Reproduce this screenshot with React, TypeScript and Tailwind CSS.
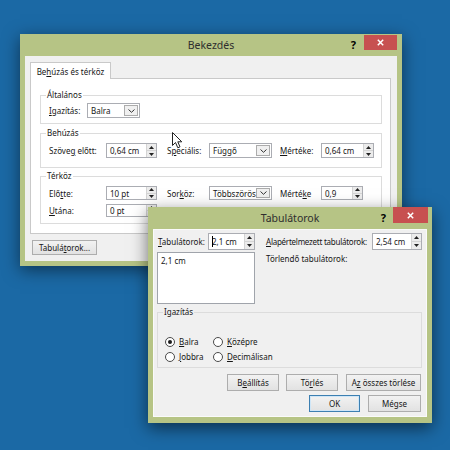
import React from "react";

type Kids = { children?: React.ReactNode };

function Key({ children }: Kids) {
  return <span className="underline decoration-1 underline-offset-1">{children}</span>;
}

function UpDown() {
  return (
    <div className="w-[10px] flex flex-col border-l border-[#d4d4d4] bg-[#ececec]">
      <div className="flex-1 flex items-center justify-center border-b border-[#d4d4d4]">
        <svg width="5" height="3" viewBox="0 0 5 3">
          <path d="M0 3 L2.5 0 L5 3Z" fill="#222" />
        </svg>
      </div>
      <div className="flex-1 flex items-center justify-center">
        <svg width="5" height="3" viewBox="0 0 5 3">
          <path d="M0 0 L5 0 L2.5 3Z" fill="#222" />
        </svg>
      </div>
    </div>
  );
}

function Spin({ value, className, caret }: { value: string; className: string; caret?: boolean }) {
  return (
    <div className={`flex bg-white border border-[#abadb3] ${className}`}>
      <div className="flex-1 flex items-center pl-[3px] whitespace-nowrap relative">
        {caret && <span className="absolute left-[3px] top-[2px] bottom-[2px] w-px bg-black" />}
        {value}
      </div>
      <UpDown />
    </div>
  );
}

function Select({ value, className }: { value: string; className: string }) {
  return (
    <div className={`flex bg-white border border-[#abadb3] ${className}`}>
      <div className="flex-1 flex items-center pl-[3px] overflow-hidden whitespace-nowrap">{value}</div>
      <div className="w-[14px] my-px mr-px flex items-center justify-center border border-[#acacac] bg-[#f0f0f0]">
        <svg width="7" height="4" viewBox="0 0 7 4">
          <path d="M0.5 0.5 L3.5 3.3 L6.5 0.5" stroke="#333" strokeWidth="1" fill="none" />
        </svg>
      </div>
    </div>
  );
}

function Btn({ children, className, primary }: Kids & { className: string; primary?: boolean }) {
  return (
    <div
      className={`flex items-center justify-center border bg-linear-to-b from-[#f2f2f2] to-[#e2e2e2] ${
        primary ? "border-[#3c7fb1] shadow-[inset_0_0_0_1px_#cfe6f7]" : "border-[#adadad]"
      } ${className}`}
    >
      <span className="whitespace-nowrap">{children}</span>
    </div>
  );
}

function Radio({ checked, children }: Kids & { checked?: boolean }) {
  return (
    <div className="flex items-center gap-[4px]">
      <div className="w-[10px] h-[10px] rounded-full border border-[#4a4a4a] bg-white flex items-center justify-center">
        {checked && <div className="w-[4px] h-[4px] rounded-full bg-[#1a1a1a]" />}
      </div>
      <span>{children}</span>
    </div>
  );
}

function Group({ label, labelBg, className, children }: Kids & { label: string; labelBg: string; className: string }) {
  return (
    <div className={`relative border border-[#dcdcdc] ${className}`}>
      <span className={`absolute -top-[7px] left-[5px] px-px leading-[12px] ${labelBg}`}>{label}</span>
      {children}
    </div>
  );
}

function TitleBar({ title, closeClass, helpClass }: { title: string; closeClass: string; helpClass: string }) {
  return (
    <div className="h-[22px] shrink-0 grid grid-cols-[1fr_auto_1fr]">
      <div />
      <div className="flex items-center text-[10.5px] text-[#2e2e2e]">{title}</div>
      <div className="flex justify-end items-start">
        <span className={`text-[11px] font-bold leading-none text-black ${helpClass}`}>?</span>
        <div className={`bg-[#c75050] flex items-center justify-center ${closeClass}`}>
          <svg width="7" height="7" viewBox="0 0 7 7">
            <path d="M0.8 0.8 L6.2 6.2 M6.2 0.8 L0.8 6.2" stroke="#fff" strokeWidth="1.5" />
          </svg>
        </div>
      </div>
    </div>
  );
}

function Cursor() {
  return (
    <svg className="absolute left-[172px] top-[132px]" width="11" height="17" viewBox="0 0 11 17">
      <path
        d="M0.5 0.5 L0.5 13.5 L3.5 10.5 L5.8 15.8 L8 14.8 L5.8 9.8 L9.8 9.8 Z"
        fill="#fff"
        stroke="#222"
        strokeWidth="1"
        strokeLinejoin="round"
      />
    </svg>
  );
}

function ParagraphDialog() {
  return (
    <div className="absolute left-[20px] top-[34px] w-[382px] h-[232px] bg-[#b6c485] flex flex-col shadow-[0_4px_16px_rgba(0,0,0,0.5)]">
      <TitleBar title="Bekezdés" helpClass="mt-[5px] mr-[8px]" closeClass="w-[33px] h-[15px] mt-px mr-[5px]" />
      <div className="flex-1 mx-[5px] mb-[5px] bg-[#f0f0f0] flex flex-col pt-[6px] pl-[5px] pr-[6px]">
        <div className="flex">
          <div className="relative z-10 -mb-px h-[17px] w-[81px] bg-white border border-b-0 border-[#c9c9c9] flex items-center justify-center">
            <span className="whitespace-nowrap">
              Be<Key>h</Key>úzás és térköz
            </span>
          </div>
        </div>
        <div className="h-[156px] bg-white border border-[#c9c9c9] flex flex-col pt-[16px] pl-[9px] pr-[8px]">
          <Group label="Általános" labelBg="bg-white" className="h-[29px] pt-[7px] pl-[8px]">
            <div className="flex items-center">
              <span className="w-[38px]">
                <Key>I</Key>gazítás:
              </span>
              <Select value="Balra" className="w-[53px] h-[15px]" />
            </div>
          </Group>
          <Group label="Behúzás" labelBg="bg-white" className="mt-[9px] h-[35px] pt-[9px] pl-[8px]">
            <div className="flex items-center">
              <span className="w-[57px]">
                Szöve<Key>g</Key> előtt:
              </span>
              <Spin value="0,64 cm" className="w-[51px] h-[15px]" />
              <span className="ml-[10px] w-[42px]">
                S<Key>p</Key>eciális:
              </span>
              <Select value="Függő" className="w-[63px] h-[15px]" />
              <span className="ml-[8px] w-[41px]">
                <Key>M</Key>értéke:
              </span>
              <Spin value="0,64 cm" className="w-[53px] h-[15px]" />
            </div>
          </Group>
          <Group label="Térköz" labelBg="bg-white" className="mt-[8px] h-[48px] pt-[9px] pl-[8px]">
            <div className="flex items-center">
              <span className="w-[57px]">
                Elő<Key>t</Key>te:
              </span>
              <Spin value="10 pt" className="w-[51px] h-[14px]" />
              <span className="ml-[10px] w-[42px]">
                Sor<Key>k</Key>öz:
              </span>
              <Select value="Többszörös" className="w-[63px] h-[14px]" />
              <span className="ml-[8px] w-[41px]">
                Mérté<Key>k</Key>e
              </span>
              <Spin value="0,9" className="w-[42px] h-[14px]" />
            </div>
            <div className="flex items-center mt-[4px]">
              <span className="w-[57px]">
                <Key>U</Key>tána:
              </span>
              <Spin value="0 pt" className="w-[51px] h-[13px]" />
            </div>
          </Group>
        </div>
        <div className="flex mt-[6px] pl-[2px]">
          <Btn className="w-[65px] h-[15px]">
            Tabulá<Key>t</Key>orok...
          </Btn>
        </div>
      </div>
    </div>
  );
}

function TabsDialog() {
  return (
    <div className="absolute left-[148px] top-[207px] w-[284px] h-[216px] bg-[#b6c485] flex flex-col shadow-[0_5px_16px_rgba(0,0,0,0.55)]">
      <TitleBar title="Tabulátorok" helpClass="mt-[5px] mr-[7px]" closeClass="w-[35px] h-[16px] mr-[4px]" />
      <div className="flex-1 mx-[5px] mb-[6px] bg-[#f0f0f0] border border-[#fafafa] flex flex-col pt-[3px] pl-[3px] pr-[4px]">
        <div className="flex">
          <div className="w-[98px] flex flex-col">
            <div className="flex items-center">
              <span className="w-[51px] pl-px">
                <Key>T</Key>abulátorok:
              </span>
              <Spin value="2,1 cm" caret className="w-[47px] h-[17px]" />
            </div>
            <div className="mt-[2px] h-[52px] bg-white border border-[#a0a4ab] pl-[3px] pt-[2px]">2,1 cm</div>
          </div>
          <div className="ml-[11px] flex-1 flex flex-col">
            <div className="flex items-center">
              <span className="w-[106px] whitespace-nowrap tracking-[-0.25px]">
                <Key>A</Key>lapértelmezett tabulátorok:
              </span>
              <Spin value="2,54 cm" className="w-[50px] h-[17px]" />
            </div>
            <div className="mt-[3px]">Törlendő tabulátorok:</div>
          </div>
        </div>
        <Group label="Igazítás" labelBg="bg-[#f0f0f0]" className="mt-[8px] h-[56px] pt-[23px] pl-[7px]">
          <div className="grid grid-cols-[48px_auto] gap-y-[4px]">
            <Radio checked>
              <Key>B</Key>alra
            </Radio>
            <Radio>
              <Key>K</Key>özépre
            </Radio>
            <Radio>
              <Key>J</Key>obbra
            </Radio>
            <Radio>
              <Key>D</Key>ecimálisan
            </Radio>
          </div>
        </Group>
        <div className="flex justify-end gap-[7px] mt-[6px] pr-px">
          <Btn className="w-[52px] h-[17px]">
            B<Key>e</Key>állítás
          </Btn>
          <Btn className="w-[52px] h-[17px] mr-px">
            Tö<Key>r</Key>lés
          </Btn>
          <Btn className="w-[75px] h-[17px]">
            A<Key>z</Key> összes törlése
          </Btn>
        </div>
        <div className="flex justify-end gap-[8px] mt-[4px] pr-px">
          <Btn primary className="w-[51px] h-[17px]">
            OK
          </Btn>
          <Btn className="w-[53px] h-[17px]">Mégse</Btn>
        </div>
      </div>
    </div>
  );
}

export default function App() {
  return (
    <div className="relative w-[450px] h-[450px] overflow-hidden bg-[#1b69a5] font-['Noto_Sans','Open_Sans',sans-serif] text-[8px] leading-[11px] text-[#161616]">
      <ParagraphDialog />
      <Cursor />
      <TabsDialog />
    </div>
  );
}
